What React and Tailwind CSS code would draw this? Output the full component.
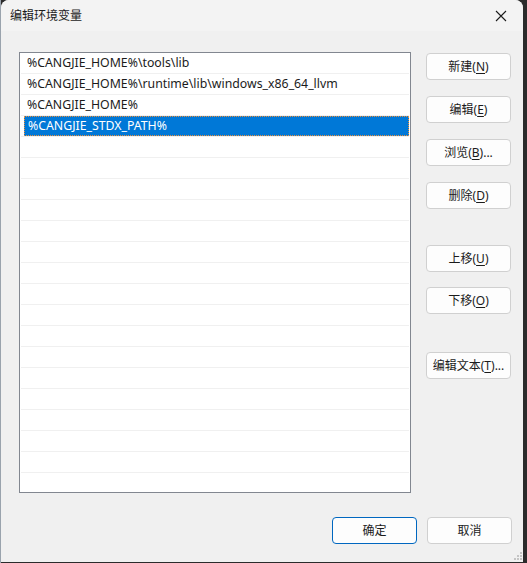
const ENTRIES = [
  '%CANGJIE_HOME%\\tools\\lib',
  '%CANGJIE_HOME%\\runtime\\lib\\windows_x86_64_llvm',
  '%CANGJIE_HOME%',
  '%CANGJIE_STDX_PATH%',
]

const ROW_COUNT = 21
const SELECTED = 3

const FONT = { fontFamily: '"Segoe UI", "Noto Sans", "Noto Sans CJK SC", sans-serif' }

function Mnemonic({ label, keyChar, suffix = '' }) {
  return (
    <>
      {label}(<span className="underline underline-offset-2">{keyChar}</span>){suffix}
    </>
  )
}

function WinButton({ children, primary = false, className = '' }) {
  return (
    <button
      className={`h-[27px] w-[85px] rounded-[4px] border bg-[#fdfdfd] text-[12px] text-[#1b1b1b] flex items-center justify-center ${
        primary ? 'border-[#0067c0]' : 'border-[#d0d0d0]'
      } ${className}`}
    >
      {children}
    </button>
  )
}

export default function App() {
  const rows = Array.from({ length: ROW_COUNT }, (_, i) => ENTRIES[i] ?? '')

  return (
    <div className="w-[527px] h-[563px] bg-[#2b2b2b] flex" style={FONT}>
      {/* thin strip of the window behind */}
      <div className="w-[1px] h-full bg-[#9aa3ad]" />

      {/* Dialog */}
      <div className="w-[522px] h-[562px] rounded-t-[8px] bg-[#f0f0f0] flex flex-col overflow-hidden relative">
        {/* Title bar */}
        <div className="h-[31px] bg-[#f3f3f3] flex items-center justify-between pl-[9px] pr-[6px] shrink-0">
          <span className="text-[12px] text-[#1b1b1b]">编辑环境变量</span>
          <svg width="30" height="20" viewBox="0 0 30 20" className="mr-[1px]">
            <path d="M10 5 L20 15 M20 5 L10 15" stroke="#1b1b1b" strokeWidth="1.1" fill="none" />
          </svg>
        </div>

        {/* Body */}
        <div className="flex pl-[18px] pt-[21px]">
          {/* List */}
          <div className="w-[392px] h-[441px] border border-[#828790] bg-white overflow-hidden">
            {rows.map((text, i) => (
              <div key={i} className="h-[21px] ml-[1px] mr-[1px] border-b border-[#f0f0f0] flex">
                <div
                  className={`ml-[3px] flex-1 h-[20px] pl-[3px] pt-[1px] flex items-center text-[12.3px] whitespace-nowrap ${
                    i === SELECTED
                      ? 'bg-[#0078d7] text-white border border-dotted border-[#e8903e] pl-[2px]'
                      : 'text-[#1b1b1b]'
                  }`}
                >
                  {text}
                </div>
              </div>
            ))}
          </div>

          {/* Buttons */}
          <div className="ml-[15px] pt-[1px] flex flex-col">
            <WinButton><Mnemonic label="新建" keyChar="N" /></WinButton>
            <WinButton className="mt-[16px]"><Mnemonic label="编辑" keyChar="E" /></WinButton>
            <WinButton className="mt-[16px]"><Mnemonic label="浏览" keyChar="B" suffix="..." /></WinButton>
            <WinButton className="mt-[16px]"><Mnemonic label="删除" keyChar="D" /></WinButton>
            <WinButton className="mt-[36px]"><Mnemonic label="上移" keyChar="U" /></WinButton>
            <WinButton className="mt-[15px]"><Mnemonic label="下移" keyChar="O" /></WinButton>
            <WinButton className="mt-[38px]"><Mnemonic label="编辑文本" keyChar="T" suffix="..." /></WinButton>
          </div>
        </div>

        {/* Footer */}
        <div className="flex justify-end gap-[10px] pr-[11px] mt-[24px]">
          <WinButton primary>确定</WinButton>
          <WinButton>取消</WinButton>
        </div>

        {/* Resize grip */}
        <svg width="8" height="8" viewBox="0 0 8 8" className="absolute right-[1px] bottom-[2px]">
          <rect x="6" y="0" width="2" height="2" fill="#c4c4c4" />
          <rect x="3" y="3" width="2" height="2" fill="#c4c4c4" />
          <rect x="6" y="3" width="2" height="2" fill="#c4c4c4" />
          <rect x="0" y="6" width="2" height="2" fill="#c4c4c4" />
          <rect x="3" y="6" width="2" height="2" fill="#c4c4c4" />
          <rect x="6" y="6" width="2" height="2" fill="#c4c4c4" />
        </svg>
      </div>
    </div>
  )
}
